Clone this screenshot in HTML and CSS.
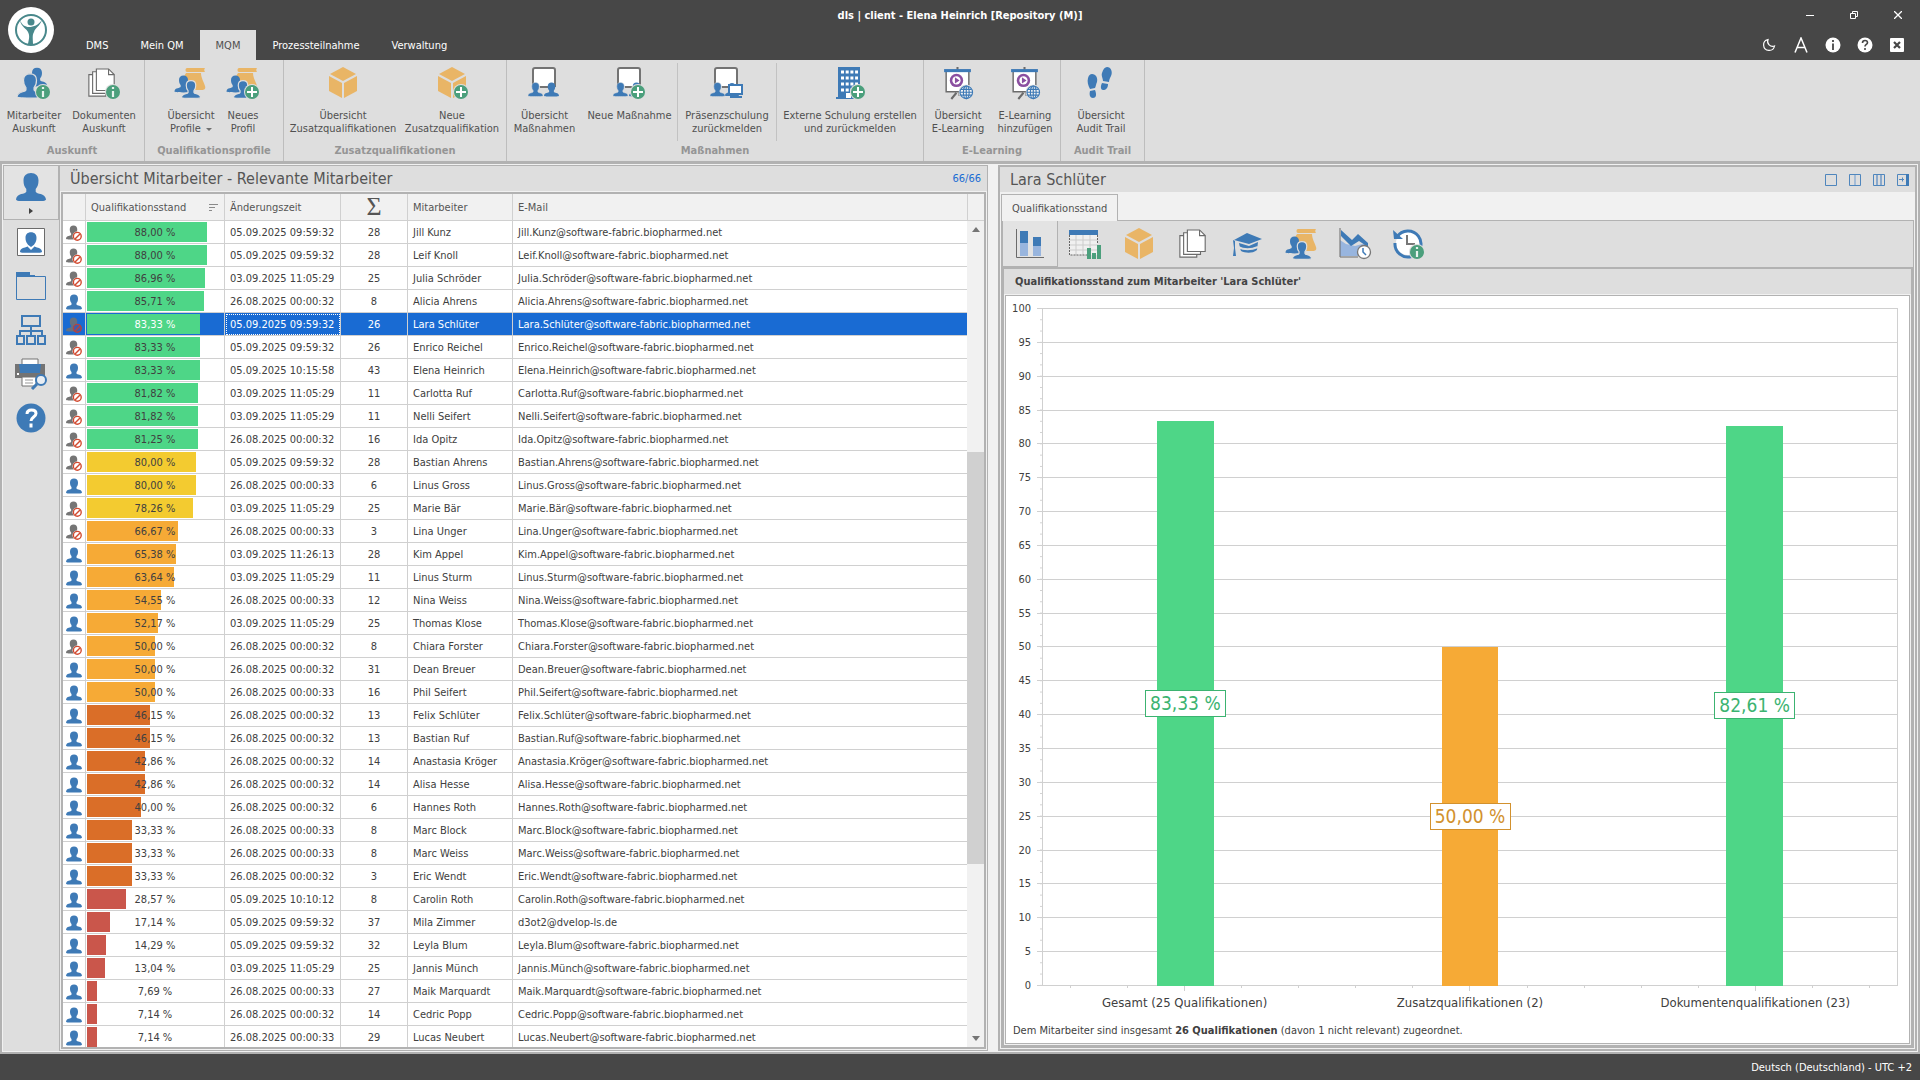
FILE: index.html
```html
<!DOCTYPE html>
<html lang="de">
<head>
<meta charset="utf-8">
<title>dls | client - Elena Heinrich [Repository (M)]</title>
<link rel="stylesheet" href="styles.css">
</head>
<body>
<svg class="sprite" aria-hidden="true">
  <symbol id="person" viewBox="0 0 32 32"><path d="M16 1c5 0 8 3 8 8 0 4-1 7-3 9v3c1 3 10 1 11 8 0 2-3 2-16 2S0 31 0 29c1-7 10-5 11-8v-3c-2-2-3-5-3-9 0-5 3-8 8-8z"/></symbol>
  <symbol id="user" viewBox="0 0 16 16"><use href="#person" width="16" height="16" fill="#3e7ab6"/></symbol>
  <symbol id="banned" viewBox="0 0 16 16"><use href="#person" width="15" height="15" fill="#757575"/><circle cx="11.300" cy="11.300" r="4.800" fill="#fff"/><circle cx="11.300" cy="11.300" r="3.900" fill="#fff" stroke="#d2492f" stroke-width="1.400"/><path d="M9 14l5-5" stroke="#d2492f" stroke-width="1.400"/></symbol>
  <symbol id="banned-sel" viewBox="0 0 16 16"><use href="#person" width="15" height="15" fill="#65707f"/><circle cx="11.300" cy="11.300" r="3.900" fill="#3d5eae" stroke="#b5433f" stroke-width="1.400"/><path d="M9 14l5-5" stroke="#b5433f" stroke-width="1.400"/></symbol>
  <symbol id="plus" viewBox="0 0 16 16"><circle cx="8" cy="8" r="8" fill="#dedede"/><circle cx="8" cy="8" r="7" fill="#4b9f7c"/><path d="M8 3v10M3 8h10" stroke="#fff" stroke-width="2"/></symbol>
  <symbol id="info" viewBox="0 0 16 16"><circle cx="8" cy="8" r="8" fill="#dedede"/><circle cx="8" cy="8" r="7" fill="#4b9f7c"/><path d="M8 3v2M8 7v6" stroke="#e8f3ee" stroke-width="2.200"/></symbol>
  <symbol id="globe" viewBox="0 0 16 16"><circle cx="8" cy="8" r="8" fill="#dedede"/><g fill="#f3f3f3" stroke="#3e7ab6" stroke-width="1.200"><circle cx="8" cy="8" r="6.500"/><ellipse cx="8" cy="8" rx="3" ry="6.500"/><path d="M8 1.500v13M1.500 8h13M2.500 5h11M2.500 11h11"/></g></symbol>
  <symbol id="box" viewBox="0 0 32 32"><g fill="#e9b566"><path d="M16 0l13 7-13 7L3 7z"/><path d="M2 9l13 7v15L2 24z"/><path d="M30 9l-13 7v15l13-7z"/></g></symbol>
  <symbol id="pages" viewBox="0 0 32 32"><g fill="#fff" stroke="#6b6b6b" stroke-width="1.200"><path d="M2 7h18v23H2z"/><path d="M6 4h18v23H6z"/><path d="M10 1h13l6 6v17H10z"/><path d="M23 1v6h6" fill="none"/></g></symbol>
  <symbol id="profile" viewBox="0 0 32 32"><path d="M13 1h18c-1 1-1 3 0 4H13c-2 0-2-4 0-4zM17 6h10c0 5 3 9 4 13 1 3-1 4-3 4h-9L9 11l3-5z" fill="#e9b566"/><use href="#person" x="0" y="8" width="19" height="18" fill="#3e7ab6"/><use href="#person" x="7" y="13" width="20" height="19" fill="#3e7ab6" stroke="#dedede" stroke-width="2"/></symbol>
  <symbol id="two" viewBox="0 0 32 32"><use href="#person" x="8" y="0" width="24" height="20" fill="#3e7ab6"/><use href="#person" x="0" y="6" width="26" height="26" fill="#3e7ab6" stroke="#dedede" stroke-width="1.500"/></symbol>
  <symbol id="course" viewBox="0 0 32 32"><path d="M5 1h22v18H5z" fill="#fff"/><path d="M5 20V3q0-2 2-2h18q2 0 2 2v17M12 20h8" fill="none" stroke="#737373" stroke-width="2"/><use href="#person" x="0" y="14" width="15" height="17" fill="#3e7ab6" stroke="#dedede"/></symbol>
  <symbol id="screen" viewBox="0 0 32 32"><path d="M16 0v3M15 25l-5 6M18 24v4" stroke="#6b6b6b" stroke-width="2"/><path d="M5 4h22v20H5z" fill="#fff" stroke="#6b6b6b" stroke-width="1.400"/><path d="M3 2h26v3H3z" fill="#3e7ab6"/><circle cx="15" cy="13" r="6.500" fill="#8b4fa0"/><circle cx="15" cy="13" r="4" fill="#fff"/><path d="M13.500 10v6l4.500-3z" fill="#8b4fa0"/><use href="#globe" x="17" y="17" width="15" height="15"/></symbol>
</svg>

<header class="titlebar">
  <a class="logo" href="#" aria-label="Startseite"><svg width="46" height="46" viewBox="0 0 46 46"><circle cx="23" cy="23" r="23" fill="#fff"/><circle cx="23" cy="23" r="15" fill="none" stroke="#48888b" stroke-width="2"/><circle cx="23" cy="15" r="3.500" fill="#48888b"/><path d="M12 13c2 5 5 7 9 7 5 0 9-2 13-7-2 6-7 8-8 12-2 3-1 7-1 12h-5c1-5 2-8 0-12-1-3-7-5-8-12z" fill="#48888b"/></svg></a>
  <div class="window-row">
    <h1>dls | client - Elena Heinrich [Repository (M)]</h1>
    <div class="window-buttons">
      <button aria-label="Minimieren"><svg width="8" height="8"><path d="M0 4.500h8" stroke="#fff"/></svg></button>
      <button aria-label="Verkleinern"><svg width="8" height="8" fill="none" stroke="#fff"><path d="M.5 2.500h5v5h-5zM2.500 2V.5h5v5H6"/></svg></button>
      <button aria-label="Schließen"><svg width="8" height="8" stroke="#fff" stroke-width="1.300"><path d="M0 0l8 8M8 0L0 8"/></svg></button>
    </div>
  </div>
  <nav class="tabs">
    <a href="#">DMS</a><a href="#">Mein QM</a><a href="#" class="active">MQM</a><a href="#">Prozessteilnahme</a><a href="#">Verwaltung</a>
  </nav>
  <div class="tools">
    <button aria-label="Dunkelmodus"><svg width="16" height="16"><path d="M7 2.500A5.500 5.500 0 1 0 13.500 9 5 5 0 0 1 7 2.500z" fill="none" stroke="#fff" stroke-width="1.200"/></svg></button>
    <button aria-label="Schriftgröße"><svg width="16" height="16"><path d="M2 15.500L8 1l6 14.500M4 10.500h8" fill="none" stroke="#fff" stroke-width="1.500"/></svg></button>
    <button aria-label="Info"><svg width="16" height="16"><circle cx="8" cy="8" r="7.500" fill="#fff"/><path d="M8 3v2M8 6.500V13" stroke="#474747" stroke-width="1.800"/></svg></button>
    <button aria-label="Hilfe"><svg width="16" height="16"><circle cx="8" cy="8" r="7.500" fill="#fff"/><path d="M5.500 6q0-2.500 2.500-2.500t2.500 2.200C10.500 7.500 8 7.500 8 9.500M8 11v2" fill="none" stroke="#474747" stroke-width="1.600"/></svg></button>
    <button aria-label="Alle schließen"><svg width="16" height="16"><rect x="1" y="1" width="14" height="14" rx="1" fill="#fff"/><path d="M5 5l6 6M11 5l-6 6" stroke="#474747" stroke-width="2.200"/></svg></button>
  </div>
</header>

<section class="ribbon" aria-label="Menüband">
  <div class="group g-info"><div class="commands flush">
    <button class="w68"><svg><use href="#two" width="32" height="32"/><use href="#info" x="18" y="17" width="16" height="16"/></svg><span>Mitarbeiter<br>Auskunft</span></button>
    <button class="w72"><svg><use href="#pages" width="30" height="32"/><use href="#info" x="18" y="17" width="16" height="16"/></svg><span>Dokumenten<br>Auskunft</span></button>
  </div><h2>Auskunft</h2></div>
  <div class="group g-profile"><div class="commands">
    <button class="w58"><svg><use href="#profile" width="32" height="32"/></svg><span>Übersicht<br>Profile <i class="caret"></i></span></button>
    <button class="w46"><svg><use href="#profile" width="32" height="32"/><use href="#plus" x="18" y="17" width="16" height="16"/></svg><span>Neues<br>Profil</span></button>
  </div><h2>Qualifikationsprofile</h2></div>
  <div class="group g-extra"><div class="commands">
    <button class="w114"><svg><use href="#box" width="34" height="32"/></svg><span>Übersicht<br>Zusatzqualifikationen</span></button>
    <button class="w104"><svg><use href="#box" width="34" height="32"/><use href="#plus" x="18" y="17" width="16" height="16"/></svg><span>Neue<br>Zusatzqualifikation</span></button>
  </div><h2>Zusatzqualifikationen</h2></div>
  <div class="group g-course"><div class="commands flush">
    <button class="w75"><svg><use href="#course" width="32" height="32"/><use href="#person" x="16" y="14" width="15" height="17" fill="#3e7ab6"/></svg><span>Übersicht<br>Maßnahmen</span></button>
    <button class="w95"><svg><use href="#course" width="32" height="32"/><use href="#person" x="16" y="14" width="15" height="17" fill="#3e7ab6"/><use href="#plus" x="17" y="17" width="16" height="16"/></svg><span>Neue Maßnahme</span></button>
    <button class="w99 split"><svg><use href="#course" width="32" height="32"/><use href="#person" x="15" y="14" width="14" height="17" fill="#3e7ab6"/><path d="M19 18h13v9H19zM20 30h12M25 28v2" fill="#fff" stroke="#3e7ab6" stroke-width="2"/></svg><span>Präsenzschulung<br>zurückmelden</span></button>
    <button class="w147 split"><svg><path d="M5 0h22v32H3v-2h2z" fill="#3e7ab6"/><path d="M8 5h17M8 11h17M8 17h17M8 23h17" stroke="#fff" stroke-width="3" stroke-dasharray="3 1.700"/><path d="M13 26h5v5h-5z" fill="#fff"/><use href="#plus" x="17" y="17" width="16" height="16"/></svg><span>Externe Schulung erstellen<br>und zurückmelden</span></button>
  </div><h2>Maßnahmen</h2></div>
  <div class="group g-learn"><div class="commands flush">
    <button class="w68"><svg><use href="#screen" width="33" height="33"/></svg><span>Übersicht<br>E-Learning</span></button>
    <button class="w66"><svg><use href="#screen" width="33" height="33"/></svg><span>E-Learning<br>hinzufügen</span></button>
  </div><h2>E-Learning</h2></div>
  <div class="group g-audit"><div class="commands flush">
    <button class="w80"><svg fill="#3e7ab6"><path d="M8 7c4 0 6 4 5 8-1 2-1 4-2 6l-5 1C4 18 3 15 4 11c1-3 2-4 4-4zM6 24l5-1c2 5 1 8-2 8s-4-3-3-7zM23 0c4 0 6 5 4 9-1 2-2 4-2 6l-6-1c0-3-2-5-1-8 1-4 3-6 5-6zM18 16l6 1c0 4-2 6-5 6-2 0-3-3-1-7z"/></svg><span>Übersicht<br>Audit Trail</span></button>
  </div><h2>Audit Trail</h2></div>
</section>

<main>
  <nav class="sidebar">
    <button class="current" aria-label="Mitarbeiter"><svg width="32" height="32"><use href="#person" x="1" y="1" width="30" height="30" fill="#3e7ab6"/></svg><i class="right-caret"></i></button>
    <button aria-label="Profil"><svg width="32" height="32"><path d="M2.500 2.500h27v27h-27z" fill="#fff" stroke="#6b6b6b"/><use href="#person" x="5" y="5" width="22" height="23" fill="#3e7ab6"/><path d="M12 18l4 3 4-3v2l-4 4-4-4z" fill="#fff"/></svg></button>
    <button aria-label="Ordner"><svg width="32" height="32"><path d="M1.500 6.500h29v23h-29z" fill="#dedede" stroke="#3e7ab6"/><path d="M1 2h14v3h5v2H1z" fill="#3e7ab6"/></svg></button>
    <button aria-label="Organigramm"><svg width="32" height="32" fill="none" stroke="#3e7ab6" stroke-width="2"><path d="M7 2h18v10H7zM2 22h7v8H2zM12 22h8v8h-8zM23 22h7v8h-7zM16 12v10M5 22v-5h22v5"/></svg></button>
    <button aria-label="Druckvorschau"><svg width="34" height="32"><path d="M1 6h30v14H1z" fill="#737373"/><path d="M8 1h16v6H8z" fill="#fff" stroke="#737373"/><path d="M5 6h22v1l-1 8H6z" fill="#3e7ab6"/><path d="M3 15h2v2H3z" fill="#fff"/><path d="M8 19h14v9H8z" fill="#fff" stroke="#737373"/><path d="M11 22h8M11 25h8" stroke="#999"/><circle cx="27" cy="22" r="5" fill="#e8edf3" stroke="#3e7ab6" stroke-width="2"/><path d="M23 26l-5 5" stroke="#3e7ab6" stroke-width="3"/></svg></button>
    <button aria-label="Hilfe"><svg width="32" height="32"><circle cx="16" cy="16" r="14.500" fill="#3e7ab6"/><path d="M12 12q0-4 4.500-4t4.500 3.500c0 3.500-5 3.500-5 7.500M16 21.500v4" fill="none" stroke="#fff" stroke-width="3"/></svg></button>
  </nav>

  <section class="panel list-panel">
    <div class="panel-title"><h2>Übersicht Mitarbeiter - Relevante Mitarbeiter</h2><span class="count">66/66</span></div>
    <div class="grid-frame">
      <div class="table-area">
      <table>
        <colgroup><col class="c-icon"><col class="c-level"><col class="c-date"><col class="c-sum"><col class="c-name"><col></colgroup>
        <thead><tr><th></th><th><div class="sorted">Qualifikationsstand<svg width="9" height="7" stroke="#8a8a8a"><path d="M0 .5h9M0 3.500h6M0 6.500h3"/></svg></div></th><th>Änderungszeit</th><th class="sigma">Σ</th><th>Mitarbeiter</th><th>E-Mail</th></tr></thead>
        <tbody>
<tr><td><svg><use href="#banned"/></svg><td><div class="meter"><i class="green" style="width:88%"></i>88,00 %</div><td>05.09.2025 09:59:32<td>28<td>Jill Kunz<td>Jill.Kunz@software-fabric.biopharmed.net
<tr><td><svg><use href="#banned"/></svg><td><div class="meter"><i class="green" style="width:88%"></i>88,00 %</div><td>05.09.2025 09:59:32<td>28<td>Leif Knoll<td>Leif.Knoll@software-fabric.biopharmed.net
<tr><td><svg><use href="#banned"/></svg><td><div class="meter"><i class="green" style="width:86.96%"></i>86,96 %</div><td>03.09.2025 11:05:29<td>25<td>Julia Schröder<td>Julia.Schröder@software-fabric.biopharmed.net
<tr><td><svg><use href="#user"/></svg><td><div class="meter"><i class="green" style="width:85.71%"></i>85,71 %</div><td>26.08.2025 00:00:32<td>8<td>Alicia Ahrens<td>Alicia.Ahrens@software-fabric.biopharmed.net
<tr class="selected"><td><svg><use href="#banned-sel"/></svg><td><div class="meter"><i class="green" style="width:83.33%"></i>83,33 %</div><td class="focus">05.09.2025 09:59:32<td>26<td>Lara Schlüter<td>Lara.Schlüter@software-fabric.biopharmed.net
<tr><td><svg><use href="#banned"/></svg><td><div class="meter"><i class="green" style="width:83.33%"></i>83,33 %</div><td>05.09.2025 09:59:32<td>26<td>Enrico Reichel<td>Enrico.Reichel@software-fabric.biopharmed.net
<tr><td><svg><use href="#user"/></svg><td><div class="meter"><i class="green" style="width:83.33%"></i>83,33 %</div><td>05.09.2025 10:15:58<td>43<td>Elena Heinrich<td>Elena.Heinrich@software-fabric.biopharmed.net
<tr><td><svg><use href="#banned"/></svg><td><div class="meter"><i class="green" style="width:81.82%"></i>81,82 %</div><td>03.09.2025 11:05:29<td>11<td>Carlotta Ruf<td>Carlotta.Ruf@software-fabric.biopharmed.net
<tr><td><svg><use href="#banned"/></svg><td><div class="meter"><i class="green" style="width:81.82%"></i>81,82 %</div><td>03.09.2025 11:05:29<td>11<td>Nelli Seifert<td>Nelli.Seifert@software-fabric.biopharmed.net
<tr><td><svg><use href="#banned"/></svg><td><div class="meter"><i class="green" style="width:81.25%"></i>81,25 %</div><td>26.08.2025 00:00:32<td>16<td>Ida Opitz<td>Ida.Opitz@software-fabric.biopharmed.net
<tr><td><svg><use href="#banned"/></svg><td><div class="meter"><i class="yellow" style="width:80%"></i>80,00 %</div><td>05.09.2025 09:59:32<td>28<td>Bastian Ahrens<td>Bastian.Ahrens@software-fabric.biopharmed.net
<tr><td><svg><use href="#user"/></svg><td><div class="meter"><i class="yellow" style="width:80%"></i>80,00 %</div><td>26.08.2025 00:00:33<td>6<td>Linus Gross<td>Linus.Gross@software-fabric.biopharmed.net
<tr><td><svg><use href="#banned"/></svg><td><div class="meter"><i class="yellow" style="width:78.26%"></i>78,26 %</div><td>03.09.2025 11:05:29<td>25<td>Marie Bär<td>Marie.Bär@software-fabric.biopharmed.net
<tr><td><svg><use href="#banned"/></svg><td><div class="meter"><i class="orange" style="width:66.67%"></i>66,67 %</div><td>26.08.2025 00:00:33<td>3<td>Lina Unger<td>Lina.Unger@software-fabric.biopharmed.net
<tr><td><svg><use href="#user"/></svg><td><div class="meter"><i class="orange" style="width:65.38%"></i>65,38 %</div><td>03.09.2025 11:26:13<td>28<td>Kim Appel<td>Kim.Appel@software-fabric.biopharmed.net
<tr><td><svg><use href="#user"/></svg><td><div class="meter"><i class="orange" style="width:63.64%"></i>63,64 %</div><td>03.09.2025 11:05:29<td>11<td>Linus Sturm<td>Linus.Sturm@software-fabric.biopharmed.net
<tr><td><svg><use href="#user"/></svg><td><div class="meter"><i class="orange" style="width:54.55%"></i>54,55 %</div><td>26.08.2025 00:00:33<td>12<td>Nina Weiss<td>Nina.Weiss@software-fabric.biopharmed.net
<tr><td><svg><use href="#user"/></svg><td><div class="meter"><i class="orange" style="width:52.17%"></i>52,17 %</div><td>03.09.2025 11:05:29<td>25<td>Thomas Klose<td>Thomas.Klose@software-fabric.biopharmed.net
<tr><td><svg><use href="#banned"/></svg><td><div class="meter"><i class="orange" style="width:50%"></i>50,00 %</div><td>26.08.2025 00:00:32<td>8<td>Chiara Forster<td>Chiara.Forster@software-fabric.biopharmed.net
<tr><td><svg><use href="#user"/></svg><td><div class="meter"><i class="orange" style="width:50%"></i>50,00 %</div><td>26.08.2025 00:00:32<td>31<td>Dean Breuer<td>Dean.Breuer@software-fabric.biopharmed.net
<tr><td><svg><use href="#user"/></svg><td><div class="meter"><i class="orange" style="width:50%"></i>50,00 %</div><td>26.08.2025 00:00:33<td>16<td>Phil Seifert<td>Phil.Seifert@software-fabric.biopharmed.net
<tr><td><svg><use href="#user"/></svg><td><div class="meter"><i class="rust" style="width:46.15%"></i>46,15 %</div><td>26.08.2025 00:00:32<td>13<td>Felix Schlüter<td>Felix.Schlüter@software-fabric.biopharmed.net
<tr><td><svg><use href="#user"/></svg><td><div class="meter"><i class="rust" style="width:46.15%"></i>46,15 %</div><td>26.08.2025 00:00:32<td>13<td>Bastian Ruf<td>Bastian.Ruf@software-fabric.biopharmed.net
<tr><td><svg><use href="#user"/></svg><td><div class="meter"><i class="rust" style="width:42.86%"></i>42,86 %</div><td>26.08.2025 00:00:32<td>14<td>Anastasia Kröger<td>Anastasia.Kröger@software-fabric.biopharmed.net
<tr><td><svg><use href="#user"/></svg><td><div class="meter"><i class="rust" style="width:42.86%"></i>42,86 %</div><td>26.08.2025 00:00:32<td>14<td>Alisa Hesse<td>Alisa.Hesse@software-fabric.biopharmed.net
<tr><td><svg><use href="#user"/></svg><td><div class="meter"><i class="rust" style="width:40%"></i>40,00 %</div><td>26.08.2025 00:00:32<td>6<td>Hannes Roth<td>Hannes.Roth@software-fabric.biopharmed.net
<tr><td><svg><use href="#user"/></svg><td><div class="meter"><i class="rust" style="width:33.33%"></i>33,33 %</div><td>26.08.2025 00:00:33<td>8<td>Marc Block<td>Marc.Block@software-fabric.biopharmed.net
<tr><td><svg><use href="#user"/></svg><td><div class="meter"><i class="rust" style="width:33.33%"></i>33,33 %</div><td>26.08.2025 00:00:33<td>8<td>Marc Weiss<td>Marc.Weiss@software-fabric.biopharmed.net
<tr><td><svg><use href="#user"/></svg><td><div class="meter"><i class="rust" style="width:33.33%"></i>33,33 %</div><td>26.08.2025 00:00:32<td>3<td>Eric Wendt<td>Eric.Wendt@software-fabric.biopharmed.net
<tr><td><svg><use href="#user"/></svg><td><div class="meter"><i class="red" style="width:28.57%"></i>28,57 %</div><td>05.09.2025 10:10:12<td>8<td>Carolin Roth<td>Carolin.Roth@software-fabric.biopharmed.net
<tr><td><svg><use href="#user"/></svg><td><div class="meter"><i class="red" style="width:17.14%"></i>17,14 %</div><td>05.09.2025 09:59:32<td>37<td>Mila Zimmer<td>d3ot2@dvelop-ls.de
<tr><td><svg><use href="#user"/></svg><td><div class="meter"><i class="red" style="width:14.29%"></i>14,29 %</div><td>05.09.2025 09:59:32<td>32<td>Leyla Blum<td>Leyla.Blum@software-fabric.biopharmed.net
<tr><td><svg><use href="#user"/></svg><td><div class="meter"><i class="red" style="width:13.04%"></i>13,04 %</div><td>03.09.2025 11:05:29<td>25<td>Jannis Münch<td>Jannis.Münch@software-fabric.biopharmed.net
<tr><td><svg><use href="#user"/></svg><td><div class="meter"><i class="red" style="width:7.69%"></i>7,69 %</div><td>26.08.2025 00:00:33<td>27<td>Maik Marquardt<td>Maik.Marquardt@software-fabric.biopharmed.net
<tr><td><svg><use href="#user"/></svg><td><div class="meter"><i class="red" style="width:7.14%"></i>7,14 %</div><td>26.08.2025 00:00:32<td>14<td>Cedric Popp<td>Cedric.Popp@software-fabric.biopharmed.net
<tr><td><svg><use href="#user"/></svg><td><div class="meter"><i class="red" style="width:7.14%"></i>7,14 %</div><td>26.08.2025 00:00:33<td>29<td>Lucas Neubert<td>Lucas.Neubert@software-fabric.biopharmed.net
        </tbody>
      </table>
      </div>
      <div class="scroll">
        <div class="scroll-head"></div>
        <i class="up"></i><div class="track"><div class="thumb"></div></div><i class="down"></i>
      </div>
    </div>
  </section>

  <section class="panel detail-panel">
    <div class="panel-title"><h2>Lara Schlüter</h2>
      <div class="view-buttons">
        <button aria-label="Eine Spalte"><svg width="12" height="12"><path d="M.5.5h11v11H.5z" fill="none" stroke="#4f86bd"/></svg></button>
        <button aria-label="Zwei Spalten"><svg width="12" height="12" fill="none"><path d="M6 1v10" stroke="#a5bcd6" stroke-width="2"/><path d="M.5.5h11v11H.5z" stroke="#4f86bd"/></svg></button>
        <button aria-label="Drei Spalten"><svg width="12" height="12" fill="none"><path d="M4 1v10M8 1v10" stroke="#8aa9cc" stroke-width="2"/><path d="M.5.5h11v11H.5z" stroke="#4f86bd"/></svg></button>
        <button aria-label="Ausblenden"><svg width="12" height="12" fill="none" stroke="#4f86bd"><path d="M.5.5h11v11H.5zM2 5.500h5M5.500 3.500v4"/><path d="M10.500 0v12" stroke="#3e7ab6" stroke-width="3"/></svg></button>
      </div>
    </div>
    <div class="subtabs"><a href="#">Qualifikationsstand</a></div>
    <div class="toolbar">
      <button class="current" aria-label="Diagramm"><svg width="32" height="32"><path d="M2.500 1v28.500H30" fill="none" stroke="#6b6b6b"/><path d="M6 3h8v12H6zM19 9h8v9h-8z" fill="#3e7ab6"/><path d="M6 15h8v13H6zM19 18h8v10h-8z" fill="#98b5de"/></svg></button>
      <button aria-label="Tabelle"><svg width="34" height="32"><path d="M1.500 5h28v22h-28z" fill="#f0f0f0"/><path d="M2 12h28M2 17h28M2 22h28M8 7v20M15 7v20M22 7v20" stroke="#ccc"/><path d="M1.500 7v20h18M29.500 7v8" fill="none" stroke="#666" stroke-dasharray="2 1"/><path d="M1 2h29v5H1z" fill="#3e7ab6"/><path d="M19 20h4v11h-4zM24 25h4v6h-4zM29 17h4v14h-4z" fill="#4b9f7c"/></svg></button>
      <button aria-label="Zusatzqualifikationen"><svg width="32" height="32"><use href="#box"/></svg></button>
      <button aria-label="Dokumente"><svg width="30" height="32"><use href="#pages"/></svg></button>
      <button aria-label="Schulungen"><svg width="32" height="32" fill="#3e7ab6"><path d="M16 5l15 6-13 5-15-4z"/><path d="M8 15l10 3 9-4-1 8c-5 4-12 3-16 1l-1-3zM2 12l2 1v7l1 8H2l1-8z"/><path d="M7 19c6 3 13 3 20 0" fill="none" stroke="#dedede" stroke-width="2"/></svg></button>
      <button aria-label="Profile"><svg width="32" height="32"><use href="#profile"/></svg></button>
      <button aria-label="Verlauf"><svg width="34" height="32"><path d="M2 12l6 4 9 2 11-3v13H2z" fill="#98b5de"/><path d="M3 2l11 10 6-6 10 9v4l-9-6-8 5L3 8z" fill="#3e7ab6"/><path d="M2 0v29h18" fill="none" stroke="#6b6b6b"/><circle cx="26" cy="24" r="6.500" fill="#fff" stroke="#777" stroke-width="1.300"/><path d="M25 20v4l3 3" fill="none" stroke="#3e7ab6" stroke-width="1.500"/></svg></button>
      <button aria-label="Historie"><svg width="34" height="32"><circle cx="16" cy="15" r="12" fill="#fff"/><path d="M5 9A13 13 0 1 1 3 15" fill="none" stroke="#3e7ab6" stroke-width="3"/><path d="M1 2l1 9h9z" fill="#3e7ab6"/><path d="M15 7v9h8" fill="none" stroke="#777" stroke-width="2"/><use href="#info" x="17" y="16" width="16" height="16"/></svg></button>
    </div>
    <div class="frame">
      <h3>Qualifikationsstand zum Mitarbeiter 'Lara Schlüter'</h3>
      <div class="chart">
        <div class="y-labels"><span>100</span><span>95</span><span>90</span><span>85</span><span>80</span><span>75</span><span>70</span><span>65</span><span>60</span><span>55</span><span>50</span><span>45</span><span>40</span><span>35</span><span>30</span><span>25</span><span>20</span><span>15</span><span>10</span><span>5</span><span>0</span></div>
        <div class="y-ticks"></div>
        <div class="plot">
          <div class="lines"><i></i><i></i><i></i><i></i><i></i><i></i><i></i><i></i><i></i><i></i><i></i><i></i><i></i><i></i><i></i><i></i><i></i><i></i><i></i><i></i><i></i></div>
          <div class="bars">
            <div class="bar green" style="height:83.33%"><span class="tag tag-green">83,33 %</span></div>
            <div class="bar orange" style="height:50%"><span class="tag tag-orange">50,00 %</span></div>
            <div class="bar green" style="height:82.61%"><span class="tag tag-green">82,61 %</span></div>
          </div>
        </div>
        <div class="x-ticks"><i></i><i></i><i></i><i></i><i></i><i></i><i></i><i></i><i></i><i></i><i></i><i></i><i></i><i></i><i></i></div>
        <div class="x-labels"><span>Gesamt (25 Qualifikationen)</span><span>Zusatzqualifikationen (2)</span><span>Dokumentenqualifikationen (23)</span></div>
        <p>Dem Mitarbeiter sind insgesamt <b>26 Qualifikationen</b> (davon 1 nicht relevant) zugeordnet.</p>
      </div>
    </div>
  </section>
</main>

<footer>Deutsch (Deutschland) - UTC +2</footer>
</body>
</html>
```
FILE: styles.css
```css
* { box-sizing: border-box; }

body {
  margin: 0;
  height: 100vh;
  display: flex;
  flex-direction: column;
  background: #f1f1f1;
  color: #404040;
  font: 11px/13px "DejaVu Sans Condensed", "DejaVu Sans", sans-serif;
}

h1, h2, h3, p { margin: 0; font-size: 11px; }
a { color: inherit; text-decoration: none; }
button {
  padding: 0;
  border: 0;
  background: none;
  color: inherit;
  font: inherit;
}
svg { display: block; }
.sprite { width: 0; height: 0; flex: none; }

/* Title bar */
.titlebar {
  flex: none;
  display: grid;
  grid-template-columns: 70px 1fr auto;
  grid-template-rows: 30px 30px;
  background: #474747;
  color: #fff;
}
.logo { grid-area: 1 / 1 / 3 / 2; align-self: center; padding-left: 8px; }
.window-row {
  grid-area: 1 / 1 / 2 / 4;
  display: grid;
  grid-template-columns: 1fr auto 1fr;
  align-items: center;
}
.window-row h1 { grid-column: 2; }
.window-buttons { display: flex; justify-content: flex-end; }
.window-buttons button { width: 44px; height: 30px; display: grid; place-items: center; }
.tabs { grid-area: 2 / 2; display: flex; }
.tabs a { padding: 2px 16px 0; line-height: 28px; }
.tabs .active { background: #dedede; color: #505050; }
.tools { grid-area: 2 / 3; display: flex; padding-right: 7px; }
.tools button { width: 32px; display: grid; place-items: center; }

/* Ribbon */
.ribbon {
  flex: none;
  display: flex;
  height: 104px;
  background: #dedede;
  border-bottom: 3px solid #b2b2b2;
  color: #505050;
}
.group {
  display: flex;
  flex-direction: column;
  flex: none;
  border-right: 1px solid #bdbdbd;
}
.group h2 { text-align: center; color: #959595; line-height: 20px; }
.commands { display: flex; justify-content: center; height: 81px; padding-top: 3px; }
.commands.flush { justify-content: flex-start; }
.commands button {
  display: flex;
  flex-direction: column;
  align-items: center;
  gap: 8px;
  padding-top: 4px;
  white-space: nowrap;
}
.commands svg { flex: none; width: 34px; height: 34px; }
.commands .split { border-left: 1px solid #c2c2c2; }
.g-info { width: 145px; }
.g-profile { width: 139px; }
.g-extra { width: 223px; }
.g-course { width: 417px; }
.g-learn { width: 137px; }
.g-audit { width: 84px; }
.w46 { width: 46px; }
.w58 { width: 58px; }
.w66 { width: 66px; }
.w68 { width: 68px; }
.w72 { width: 72px; }
.w75 { width: 75px; }
.w80 { width: 80px; }
.w95 { width: 95px; }
.w99 { width: 99px; }
.w104 { width: 104px; }
.w114 { width: 114px; }
.w147 { width: 147px; }
.caret {
  display: inline-block;
  vertical-align: middle;
  margin-left: 2px;
  border: 3px solid transparent;
  border-top-color: #707070;
  border-bottom: 0;
}

/* Work area */
main {
  flex: 1;
  min-height: 0;
  display: flex;
  padding: 1px;
  border: solid #b2b2b2;
  border-width: 0 2px 2px;
}
.sidebar { flex: none; width: 56px; background: #dedede; }
.sidebar button { display: grid; place-items: center; width: 56px; height: 44px; }
.sidebar .current { height: 55px; border: 1px solid #b2b2b2; background: #e3e3e3; align-content: space-evenly; }
.right-caret { border: 3px solid transparent; border-left: 4px solid #404040; border-right: 0; }

.panel { display: flex; flex-direction: column; min-width: 0; }
.panel-title {
  flex: none;
  display: flex;
  justify-content: space-between;
  align-items: center;
  height: 25px;
  background: #dedede;
}
.panel-title h2 { font-size: 16px; font-weight: 400; line-height: 24px; color: #555; }

.list-panel { flex: 1 1 929px; border: 1px solid #b2b2b2; }
.list-panel .panel-title { padding: 0 6px 0 10px; }
.count { color: #196bd3; }
.grid-frame { flex: 1; min-height: 0; margin: 1px; display: flex; border: 2px solid #b2b2b2; background: #fff; }
.table-area { flex: 1; min-width: 0; overflow: hidden; }
table { width: 100%; table-layout: fixed; border-collapse: separate; border-spacing: 0; }
.c-icon { width: 23px; }
.c-level { width: 139px; }
.c-date { width: 116px; }
.c-sum { width: 67px; }
.c-name { width: 105px; }
th, td {
  padding: 0 0 0 5px;
  border: solid #d0d0d0;
  border-width: 0 1px 1px 0;
  text-align: left;
  white-space: nowrap;
}
th { height: 27px; background: #f1f1f1; color: #555; font-weight: 400; }
td { height: 23px; padding-top: 2px; line-height: 20px; }
th:last-child, td:last-child { border-right: 0; }
.sorted { display: flex; justify-content: space-between; align-items: center; padding-right: 6px; }
th.sigma { padding: 0; text-align: center; font: 26px/26px "Liberation Serif", serif; }
td:first-child { padding: 1px 0 0 3px; }
td:first-child svg { width: 16px; height: 16px; }
td:nth-child(2) { padding: 0 1px; }
td:nth-child(4) { padding-left: 0; text-align: center; }
.meter { position: relative; z-index: 0; height: 20px; padding-top: 2px; line-height: 18px; text-align: center; }
.meter i { position: absolute; z-index: -1; left: 0; top: 0; height: 20px; }
.green { background: #4ed687; }
.yellow { background: #f3cb30; }
.orange { background: #f6aa36; }
.rust { background: #da6e28; }
.red { background: #ca564b; }
.selected { background: #196bd3; color: #fff; }
.focus { outline: 1px dotted #fff; outline-offset: -2px; }

.scroll { flex: none; width: 17px; display: flex; flex-direction: column; align-items: center; background: #f1f1f1; }
.scroll-head { flex: none; width: 17px; height: 27px; border: solid #d0d0d0; border-width: 0 0 1px 1px; }
.up, .down { flex: none; margin: 6px 0; border: 4px solid transparent; }
.up { border-top: 0; border-bottom: 5px solid #757575; }
.down { border-bottom: 0; border-top: 5px solid #757575; }
.track { flex: 1; width: 17px; display: grid; grid-template-rows: 27fr 52fr 21fr; }
.thumb { grid-row: 2; background: #d0d0d0; }

/* Detail area */
.detail-panel { flex: 1 1 919px; margin-left: 10px; border: 2px solid #b2b2b2; }
.detail-panel .panel-title { padding: 0 0 0 10px; }
.view-buttons { display: flex; }
.view-buttons button { width: 24px; height: 24px; display: grid; place-items: center; }
.subtabs { flex: none; display: flex; height: 29px; padding: 2px 1px 0; position: relative; z-index: 1; }
.subtabs a { height: 27px; padding: 0 10px; line-height: 27px; color: #505050; background: #f1f1f1; border: 1px solid #b2b2b2; border-bottom: 0; }
.toolbar {
  flex: none;
  display: flex;
  height: 47px;
  margin: -1px 1px 0;
  border: 1px solid #b2b2b2;
  border-bottom: 0;
  background: #dedede;
}
.toolbar button { width: 54px; display: grid; place-items: center; }
.toolbar .current { width: 56px; border: 1px solid #b2b2b2; border-top: 0; background: #e3e3e3; }
.frame {
  flex: 1;
  min-height: 0;
  display: flex;
  flex-direction: column;
  margin: 0 1px 1px;
  border: 3px solid #b2b2b2;
  border-top-width: 2px;
}
.frame h3 { flex: none; padding-left: 11px; line-height: 25px; background: #dedede; color: #444; }
.chart {
  flex: 1;
  min-height: 0;
  margin: 1px;
  padding: 12px 11px 0 0;
  border: 1px solid #b2b2b2;
  background: #fff;
  display: grid;
  grid-template-columns: 34px 2px 1fr;
  grid-template-rows: 1fr 6px auto auto;
}
.y-labels { display: flex; flex-direction: column; justify-content: space-between; padding-right: 9px; text-align: right; }
.y-labels span { height: 1px; line-height: 1px; }
.y-ticks { background: linear-gradient(#d0d0d0 1px, transparent 1px) 0 0 / 2px calc((100% - 1px) / 60); }
.plot { display: grid; grid-template: 100% / 100%; border: solid #d0d0d0; border-width: 0 1px; }
.lines, .bars { grid-area: 1 / 1; }
.lines { display: flex; flex-direction: column; justify-content: space-between; margin-left: -6px; }
.lines i { height: 1px; background: #d0d0d0; }
.bars { display: grid; grid-template-columns: repeat(3, 1fr); grid-template-rows: 100%; align-items: end; justify-items: center; }
.bar { width: 20%; display: flex; align-items: center; justify-content: center; }
.tag { flex: none; width: 81px; border: 1px solid; background: #fff; font-size: 19px; line-height: 25px; text-align: center; }
.tag-green { color: #3cb371; }
.tag-orange { color: #d2912e; }
.x-ticks { grid-column: 3; display: grid; grid-template-columns: repeat(15, 1fr); justify-items: center; }
.x-ticks i { width: 1px; height: 2px; background: #d0d0d0; }
.x-ticks i:nth-child(5n + 3) { height: 5px; }
.x-labels { grid-column: 3; display: grid; grid-template-columns: repeat(3, 1fr); text-align: center; font-size: 13px; line-height: 22px; }
.chart p { grid-column: 1 / 4; padding: 9px 0 4px 7px; line-height: 16px; }

footer { flex: none; height: 26px; padding-right: 8px; line-height: 27px; text-align: right; background: #474747; color: #fff; }
```
